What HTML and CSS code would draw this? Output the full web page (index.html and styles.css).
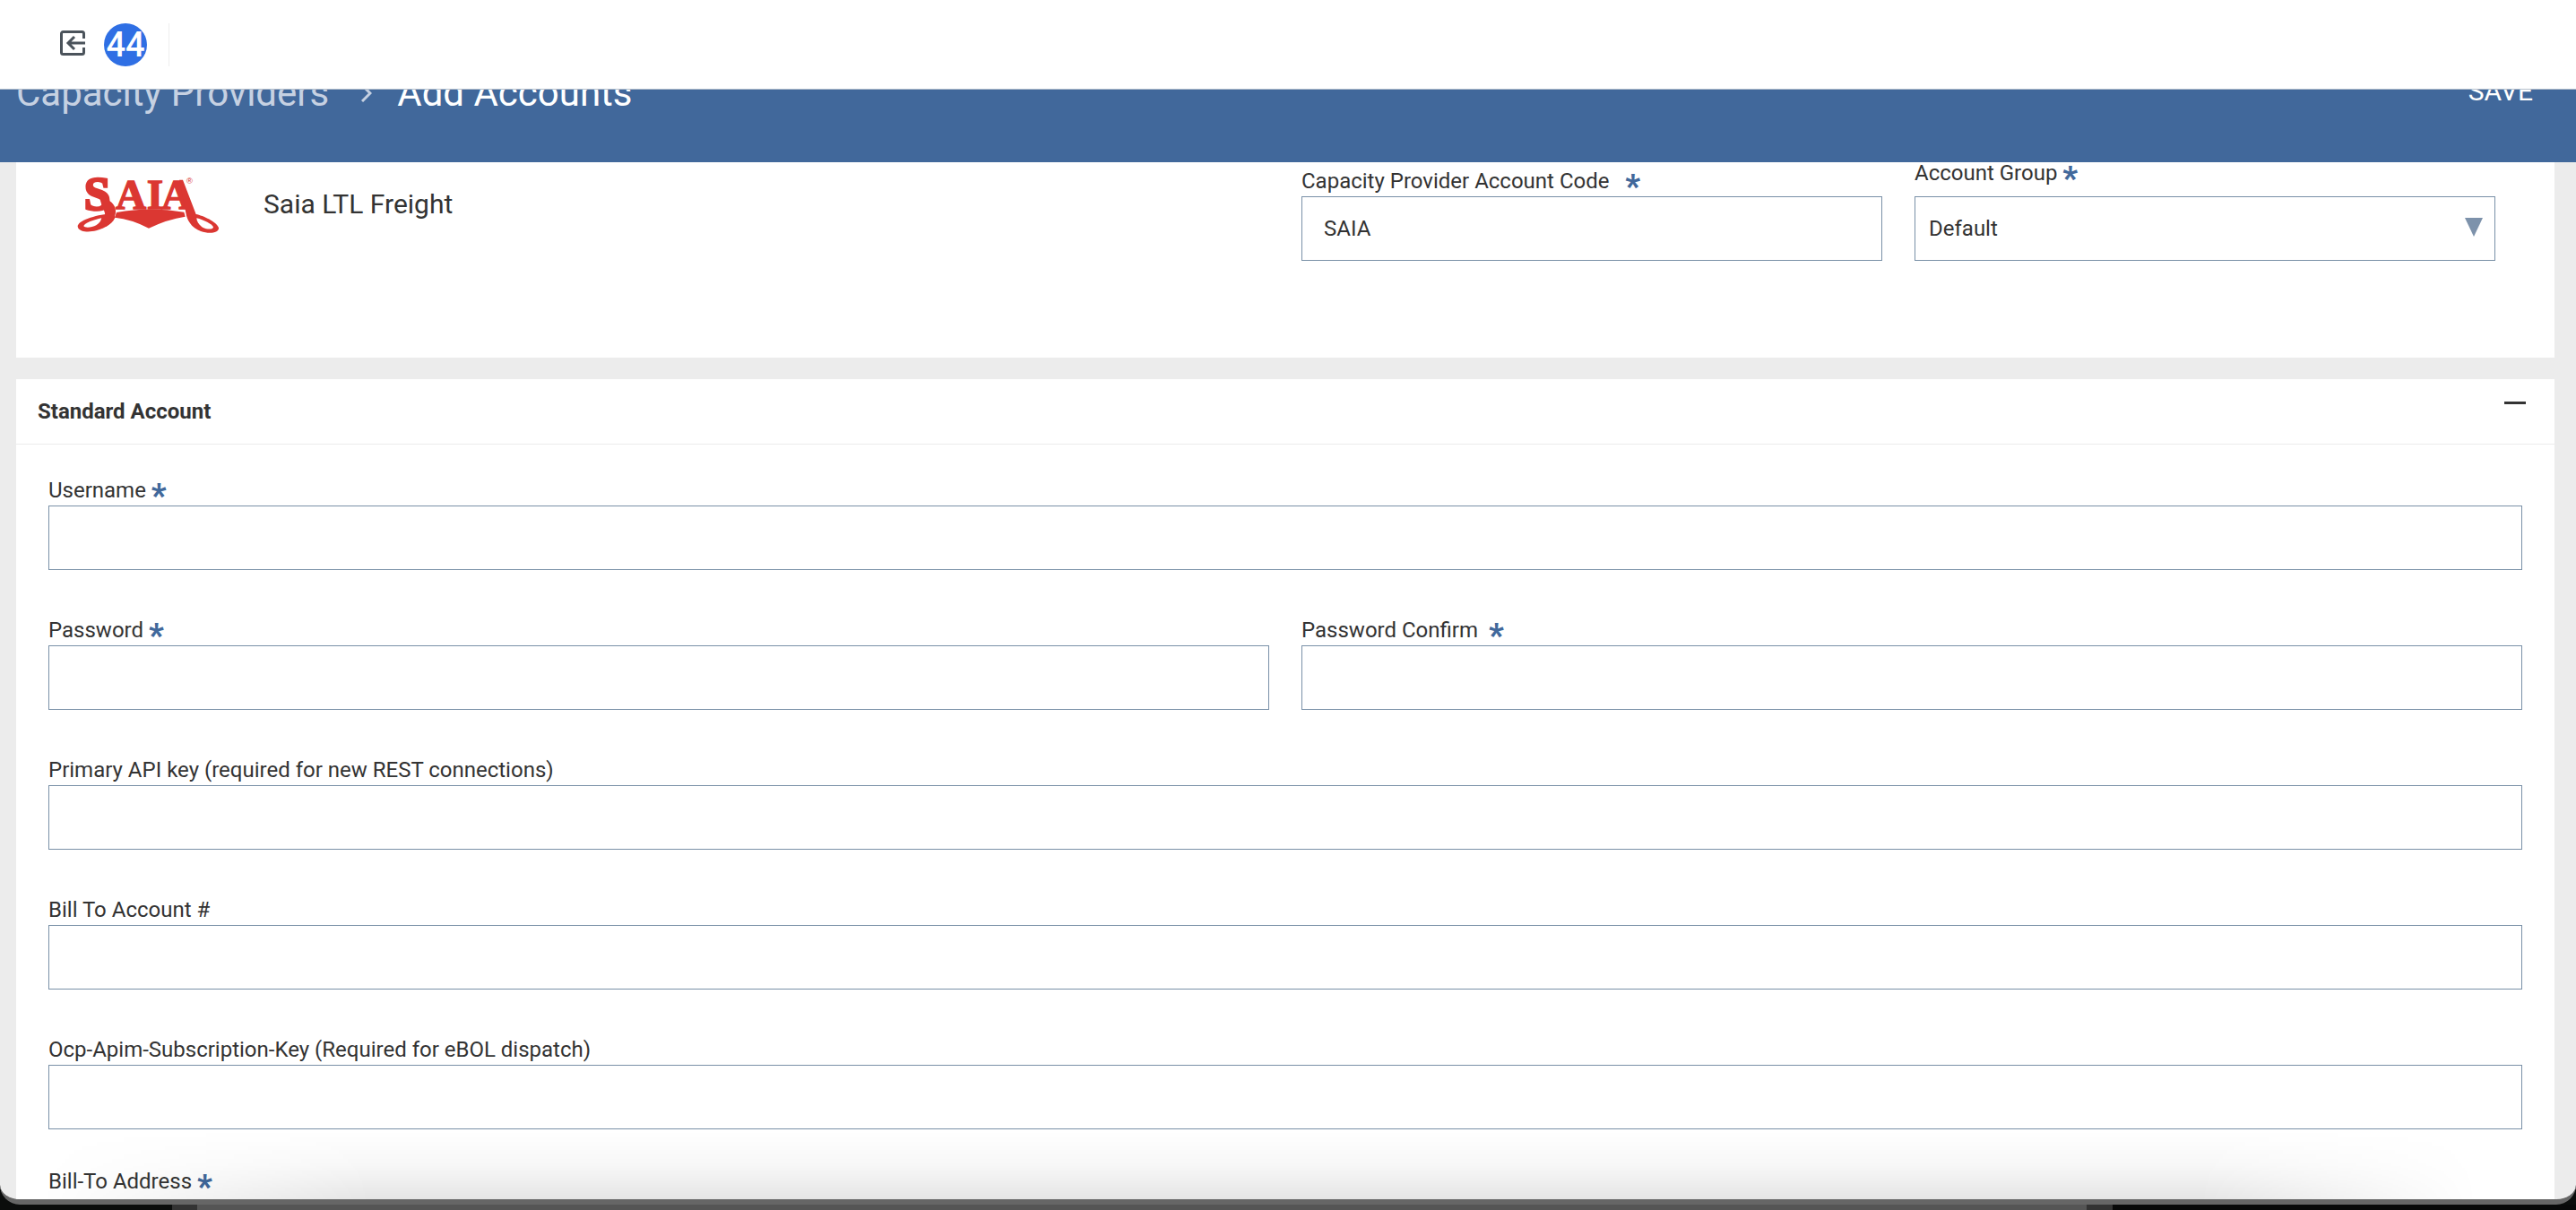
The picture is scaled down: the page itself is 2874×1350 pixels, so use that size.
FILE: index.html
```
<!DOCTYPE html>
<html lang="en">
<head>
    <meta charset="UTF-8">
    <meta name="viewport" content="width=device-width, initial-scale=1.0">
    <title>Add Accounts</title>
    <link rel="stylesheet" href="styles.css">
</head>
<body>
    <div class="window">
        <div class="topbar">
            <button type="button" class="exit-button" aria-label="Exit">
                <svg width="28" height="28" viewBox="0 0 28 28" fill="none" stroke="#4b535b" stroke-width="3">
                    <path d="M26.5 9V3.5a2 2 0 0 0-2-2h-21a2 2 0 0 0-2 2v21a2 2 0 0 0 2 2h21a2 2 0 0 0 2-2V19"/>
                    <path d="M28 14H9M16 7l-7 7 7 7"/>
                </svg>
            </button>
            <a href="#" class="brand">44</a>
            <span class="divider"></span>
        </div>

        <header class="page-header">
            <nav class="breadcrumb">
                <a href="#">Capacity Providers</a>
                <svg width="12" height="20" viewBox="0 0 12 20" fill="none" stroke="#c6d1e2" stroke-width="3">
                    <path d="M1 1l9 9-9 9"/>
                </svg>
                <span>Add Accounts</span>
            </nav>
            <button type="submit" form="accountForm" class="save-button">SAVE</button>
        </header>

        <form id="accountForm" class="content">
            <section class="card provider">
                <div class="provider-info">
                    <svg class="provider-logo" width="160" height="66" viewBox="78 76 480 198" fill="#db3732" role="img" aria-label="Saia">
                        <text x="101" y="191" class="logo-letter-lg">S</text>
                        <text x="207" y="186" class="logo-letter">A</text>
                        <text x="311" y="186" class="logo-letter">I</text>
                        <text x="360" y="186" class="logo-letter">A</text>
                        <text x="444" y="103" class="logo-mark">®</text>
                        <path d="M210 199Q320 178 436 198L440 213Q380 222 318 252Q262 222 204 216Z"/>
                        <path d="M150 140C176 152 202 166 206 186C212 208 196 232 176 246L152 240C172 226 178 204 164 186Z"/>
                        <path d="M420 90L432 90L476 205C500 210 545 230 552 250C554 268 520 272 492 262C468 252 452 236 444 210Z"/>
                        <path d="M196 202C150 206 86 222 80 244C80 266 118 266 142 260C172 252 200 234 206 214Z"/>
                        <g fill="#ffffff">
                            <path d="M160 218C134 224 104 234 100 244C102 252 128 250 142 242C152 236 158 228 160 218Z"/>
                            <path d="M478 218C502 224 530 238 534 248C534 258 508 256 496 248C484 238 478 228 478 218Z"/>
                        </g>
                    </svg>
                    <span class="provider-name">Saia LTL Freight</span>
                </div>
                <div class="provider-fields">
                    <div class="form-group">
                        <label for="accountCode">Capacity Provider Account Code &nbsp;&nbsp;<span class="required">*</span></label>
                        <input type="text" id="accountCode" name="accountCode" value="SAIA" required>
                    </div>
                    <div class="form-group">
                        <label for="accountGroup" class="select-label">Account Group <span class="required">*</span></label>
                        <div class="select">
                            <select id="accountGroup" name="accountGroup" required>
                                <option>Default</option>
                            </select>
                        </div>
                    </div>
                </div>
            </section>

            <section class="card">
                <div class="card-header">
                    <h2>Standard Account</h2>
                    <button type="button" class="collapse-button" aria-label="Collapse"><span></span></button>
                </div>
                <div class="card-body">
                    <div class="form-group wide">
                        <label for="username">Username <span class="required">*</span></label>
                        <input type="text" id="username" name="username" required>
                    </div>
                    <div class="form-group">
                        <label for="password">Password <span class="required">*</span></label>
                        <input type="password" id="password" name="password" required>
                    </div>
                    <div class="form-group">
                        <label for="confirmPassword">Password Confirm &nbsp;<span class="required">*</span></label>
                        <input type="password" id="confirmPassword" name="confirmPassword" required>
                    </div>
                    <div class="form-group wide">
                        <label for="apiKey">Primary API key (required for new REST connections)</label>
                        <input type="text" id="apiKey" name="apiKey">
                    </div>
                    <div class="form-group wide">
                        <label for="billTo">Bill To Account #</label>
                        <input type="text" id="billTo" name="billTo">
                    </div>
                    <div class="form-group wide">
                        <label for="subscriptionKey">Ocp-Apim-Subscription-Key (Required for eBOL dispatch)</label>
                        <input type="text" id="subscriptionKey" name="subscriptionKey">
                    </div>
                    <div class="form-group wide address">
                        <label for="billToAddress" class="select-label">Bill-To Address <span class="required">*</span></label>
                        <input type="text" id="billToAddress" name="billToAddress" required>
                    </div>
                </div>
            </section>
            <div class="bottom-shade"></div>
        </form>
    </div>
    <div class="desktop"></div>
</body>
</html>
```

FILE: styles.css
```
* {
    box-sizing: border-box;
}
body {
    display: flex;
    flex-direction: column;
    height: 100vh;
    margin: 0;
    overflow: hidden;
    background-color: #0b0d0c;
    color: #333333;
    font-family: Roboto, sans-serif;
    font-size: 24px;
    line-height: 30px;
}
button {
    padding: 0;
    border: 0;
    background: none;
    font-family: inherit;
    cursor: pointer;
}
a {
    color: inherit;
    text-decoration: none;
}
.window {
    display: flex;
    flex: 1;
    flex-direction: column;
    min-height: 0;
    overflow: hidden;
    border-bottom: 6px solid #666666;
    border-radius: 0 0 22px 22px;
    background-color: #ececec;
}

/* top bar */
.topbar {
    display: flex;
    flex-shrink: 0;
    align-items: center;
    height: 100px;
    padding: 0 67px;
    border-bottom: 1px solid #b4bfcc;
    background-color: #ffffff;
}
.exit-button {
    margin-right: 21px;
    padding-bottom: 4px;
}
.exit-button svg {
    display: block;
}
.brand {
    width: 48px;
    height: 48px;
    border-radius: 50%;
    background-color: #2f6fe4;
    color: #ffffff;
    font-size: 38px;
    font-weight: 500;
    line-height: 48px;
    text-align: center;
}
.divider {
    width: 1px;
    height: 48px;
    margin-left: 24px;
    background-color: #eeeeee;
}

/* page header, scrolled partly under the top bar */
.page-header {
    display: flex;
    flex-shrink: 0;
    align-items: flex-start;
    justify-content: space-between;
    height: 81px;
    padding: 0 48px 0 18px;
    overflow: hidden;
    background-color: #41689b;
    color: #ffffff;
}
.breadcrumb {
    display: flex;
    align-items: center;
    gap: 28px;
    margin-top: -20px;
    font-size: 42px;
    line-height: 48px;
}
.breadcrumb a {
    color: #c6d1e2;
}
.breadcrumb svg {
    margin-left: 8px;
}
.save-button {
    margin-top: -20px;
    color: #ffffff;
    font-size: 30px;
    line-height: 44px;
}

/* cards */
.content {
    display: flex;
    flex: 1;
    flex-direction: column;
    gap: 24px;
    min-height: 0;
    padding: 0 24px 0 18px;
    overflow: hidden;
    position: relative;
}
.card {
    flex-shrink: 0;
    background-color: #ffffff;
}
.provider {
    display: grid;
    grid-template-columns: 1fr 1fr;
    gap: 36px;
    margin-top: -3px;
    padding: 0 36px 108px;
}
.provider-info {
    display: flex;
    align-items: flex-start;
    gap: 48px;
    padding: 18px 32px 0;
}
.provider-name {
    margin-top: 10px;
    font-size: 30px;
    line-height: 44px;
}
.logo-letter {
    font: bold 142px "Liberation Serif", serif;
    stroke: #db3732;
    stroke-width: 4px;
}
.logo-letter-lg {
    font: bold 160px "Liberation Serif", serif;
    stroke: #db3732;
    stroke-width: 8px;
}
.logo-mark {
    font: 28px "Liberation Sans", sans-serif;
}
.provider-fields {
    display: grid;
    grid-template-columns: 1fr 1fr;
    align-items: end;
    gap: 36px;
    padding-right: 30px;
}
.card-header {
    display: flex;
    align-items: center;
    justify-content: space-between;
    height: 73px;
    padding: 0 32px 0 24px;
    border-bottom: 1px solid #ececec;
}
.card-header h2 {
    margin: 0;
    font-size: 24px;
    font-weight: 700;
}
.collapse-button {
    height: 24px;
    margin-bottom: 20px;
}
.collapse-button span {
    display: block;
    width: 24px;
    height: 3px;
    background-color: #333333;
}
.card-body {
    display: grid;
    grid-template-columns: 1fr 1fr;
    gap: 52px 36px;
    padding: 36px;
}
.wide {
    grid-column: 1 / -1;
}
.address {
    margin-top: -9px;
}

/* form controls */
label {
    display: block;
    margin-bottom: 2px;
}
.select-label {
    margin-bottom: 11px;
}
.required {
    color: #41689b;
    font-size: 36px;
    font-weight: 900;
    line-height: 0;
    vertical-align: -10px;
}
input,
select {
    display: block;
    width: 100%;
    height: 72px;
    padding: 0 24px;
    border: 1px solid #7990a7;
    border-radius: 0;
    background-color: #ffffff;
    color: #333333;
    font-family: inherit;
    font-size: 24px;
}
select {
    padding: 0 15px;
    appearance: none;
}
.select {
    position: relative;
}
.select::after {
    content: "";
    position: absolute;
    top: 24px;
    right: 14px;
    border: 10px solid transparent;
    border-top: 21px solid #7d92ab;
    border-bottom: 0;
    pointer-events: none;
}

/* shade along the bottom edge */
.bottom-shade {
    position: absolute;
    right: 24px;
    bottom: 0;
    left: 18px;
    height: 76px;
    background: linear-gradient(to bottom, rgba(0, 0, 0, 0), rgba(0, 0, 0, 0.03) 50%, rgba(0, 0, 0, 0.1));
    mask-image: linear-gradient(to right, transparent 1%, #000000 14%, #000000 86%, transparent 97%);
    pointer-events: none;
}
.desktop {
    flex-shrink: 0;
    height: 6px;
    background: linear-gradient(to right, #0b0d0c 192px, #333333 192px, #333333 220px, #555555 220px, #555555 81%, #333333 81%, #333333 82%, #080909 82%);
}
```
